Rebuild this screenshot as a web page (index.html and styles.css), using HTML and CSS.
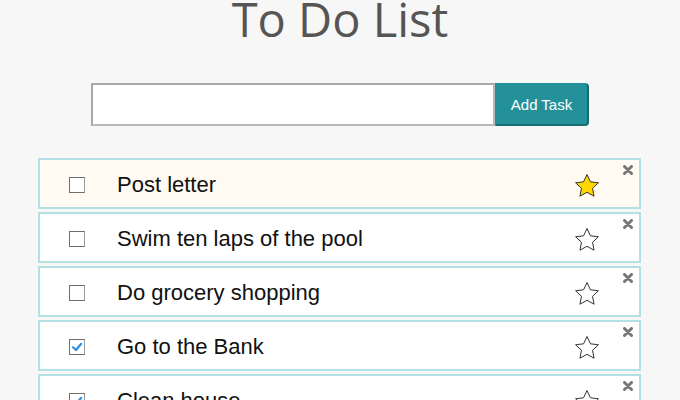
FILE: index.html
```html
<!DOCTYPE html>
<html>
<head>
<meta charset="utf-8">
<link rel="stylesheet" href="styles.css">
</head>
<body>
<div class="app">
  <h1 class="title">To Do List</h1>
  <form class="add-form">
    <input class="task-input" type="text">
    <button class="add-btn" type="button">Add Task</button>
  </form>
  <ul class="tasks">
    <li class="task starred">
      <span class="check"></span>
      <span class="label">Post letter</span>
      <svg class="star" viewBox="0 0 24 23" width="24" height="23"><polygon points="12,0.5 15.41,7.81 23.41,8.79 17.52,14.29 19.05,22.21 12,18.3 4.95,22.21 6.48,14.29 0.59,8.79 8.59,7.81"/></svg>
      <svg class="close" viewBox="0 0 10 10" width="10" height="10"><path d="M1.5 1.5 L8.5 8.5 M8.5 1.5 L1.5 8.5"/></svg>
    </li>
    <li class="task">
      <span class="check"></span>
      <span class="label">Swim ten laps of the pool</span>
      <svg class="star" viewBox="0 0 24 23" width="24" height="23"><polygon points="12,0.5 15.41,7.81 23.41,8.79 17.52,14.29 19.05,22.21 12,18.3 4.95,22.21 6.48,14.29 0.59,8.79 8.59,7.81"/></svg>
      <svg class="close" viewBox="0 0 10 10" width="10" height="10"><path d="M1.5 1.5 L8.5 8.5 M8.5 1.5 L1.5 8.5"/></svg>
    </li>
    <li class="task">
      <span class="check"></span>
      <span class="label">Do grocery shopping</span>
      <svg class="star" viewBox="0 0 24 23" width="24" height="23"><polygon points="12,0.5 15.41,7.81 23.41,8.79 17.52,14.29 19.05,22.21 12,18.3 4.95,22.21 6.48,14.29 0.59,8.79 8.59,7.81"/></svg>
      <svg class="close" viewBox="0 0 10 10" width="10" height="10"><path d="M1.5 1.5 L8.5 8.5 M8.5 1.5 L1.5 8.5"/></svg>
    </li>
    <li class="task">
      <span class="check checked"><svg viewBox="0 0 14 14" width="14" height="14"><path d="M3 7.2 L6 10 L11.2 3.8"/></svg></span>
      <span class="label">Go to the Bank</span>
      <svg class="star" viewBox="0 0 24 23" width="24" height="23"><polygon points="12,0.5 15.41,7.81 23.41,8.79 17.52,14.29 19.05,22.21 12,18.3 4.95,22.21 6.48,14.29 0.59,8.79 8.59,7.81"/></svg>
      <svg class="close" viewBox="0 0 10 10" width="10" height="10"><path d="M1.5 1.5 L8.5 8.5 M8.5 1.5 L1.5 8.5"/></svg>
    </li>
    <li class="task">
      <span class="check checked"><svg viewBox="0 0 14 14" width="14" height="14"><path d="M3 7.2 L6 10 L11.2 3.8"/></svg></span>
      <span class="label">Clean house</span>
      <svg class="star" viewBox="0 0 24 23" width="24" height="23"><polygon points="12,0.5 15.41,7.81 23.41,8.79 17.52,14.29 19.05,22.21 12,18.3 4.95,22.21 6.48,14.29 0.59,8.79 8.59,7.81"/></svg>
      <svg class="close" viewBox="0 0 10 10" width="10" height="10"><path d="M1.5 1.5 L8.5 8.5 M8.5 1.5 L1.5 8.5"/></svg>
    </li>
  </ul>
</div>
</body>
</html>
```

FILE: styles.css
```css
html, body {
  margin: 0;
  padding: 0;
  background: #f7f7f7;
}
body {
  font-family: "Liberation Sans", Arial, sans-serif;
}
.app {
  display: flex;
  flex-direction: column;
  align-items: center;
}
.title {
  margin: -4px 0 0 0;
  font-family: "Open Sans", sans-serif;
  font-weight: 400;
  font-size: 47px;
  line-height: 47px;
  color: #555555;
}
.add-form {
  margin-top: 40px;
  display: flex;
  width: 498px;
  height: 43px;
}
.task-input {
  box-sizing: border-box;
  width: 404px;
  height: 43px;
  margin: 0;
  border: 2px solid #b8b8b8;
  border-top-color: #a8a8a8;
  border-left-color: #a8a8a8;
  background: #fff;
  outline: none;
}
.add-btn {
  box-sizing: border-box;
  width: 94px;
  height: 43px;
  margin: 0;
  padding: 0;
  border: 1px solid #24919a;
  border-right: 2px solid #176b71;
  border-bottom: 2px solid #176b71;
  border-radius: 0 4px 4px 0;
  background: #24919a;
  color: #ffffff;
  font-family: "Liberation Sans", Arial, sans-serif;
  font-size: 15px;
}
.tasks {
  list-style: none;
  margin: 32px 0 0 38px;
  align-self: flex-start;
  padding: 0;
  width: 603px;
}
.task {
  position: relative;
  box-sizing: border-box;
  height: 51px;
  margin-bottom: 3px;
  padding-top: 3px;
  border: 2px solid #b3e0e3;
  background: #ffffff;
  display: flex;
  align-items: center;
}
.task.starred {
  background: #fffbf2;
}
.check {
  box-sizing: border-box;
  width: 16px;
  height: 16px;
  margin-left: 29px;
  border: 1px solid #6e6e6e;
  border-right-color: #9a9a9a;
  background: #fff;
  display: flex;
  align-items: center;
  justify-content: center;
}
.check svg path {
  fill: none;
  stroke: #2d8fe0;
  stroke-width: 2.2;
  stroke-linecap: round;
  stroke-linejoin: round;
}
.label {
  flex: 1;
  margin-left: 32px;
  font-size: 22px;
  color: #111;
}
.star {
  margin-right: 40px;
  overflow: visible;
}
.star polygon {
  fill: #ffffff;
  stroke: #333333;
  stroke-width: 1;
  stroke-linejoin: round;
}
.starred .star polygon {
  fill: #ffd700;
}
.close {
  position: absolute;
  top: 5px;
  right: 6px;
}
.close path {
  stroke: #777777;
  stroke-width: 3;
  stroke-linecap: round;
}
```
